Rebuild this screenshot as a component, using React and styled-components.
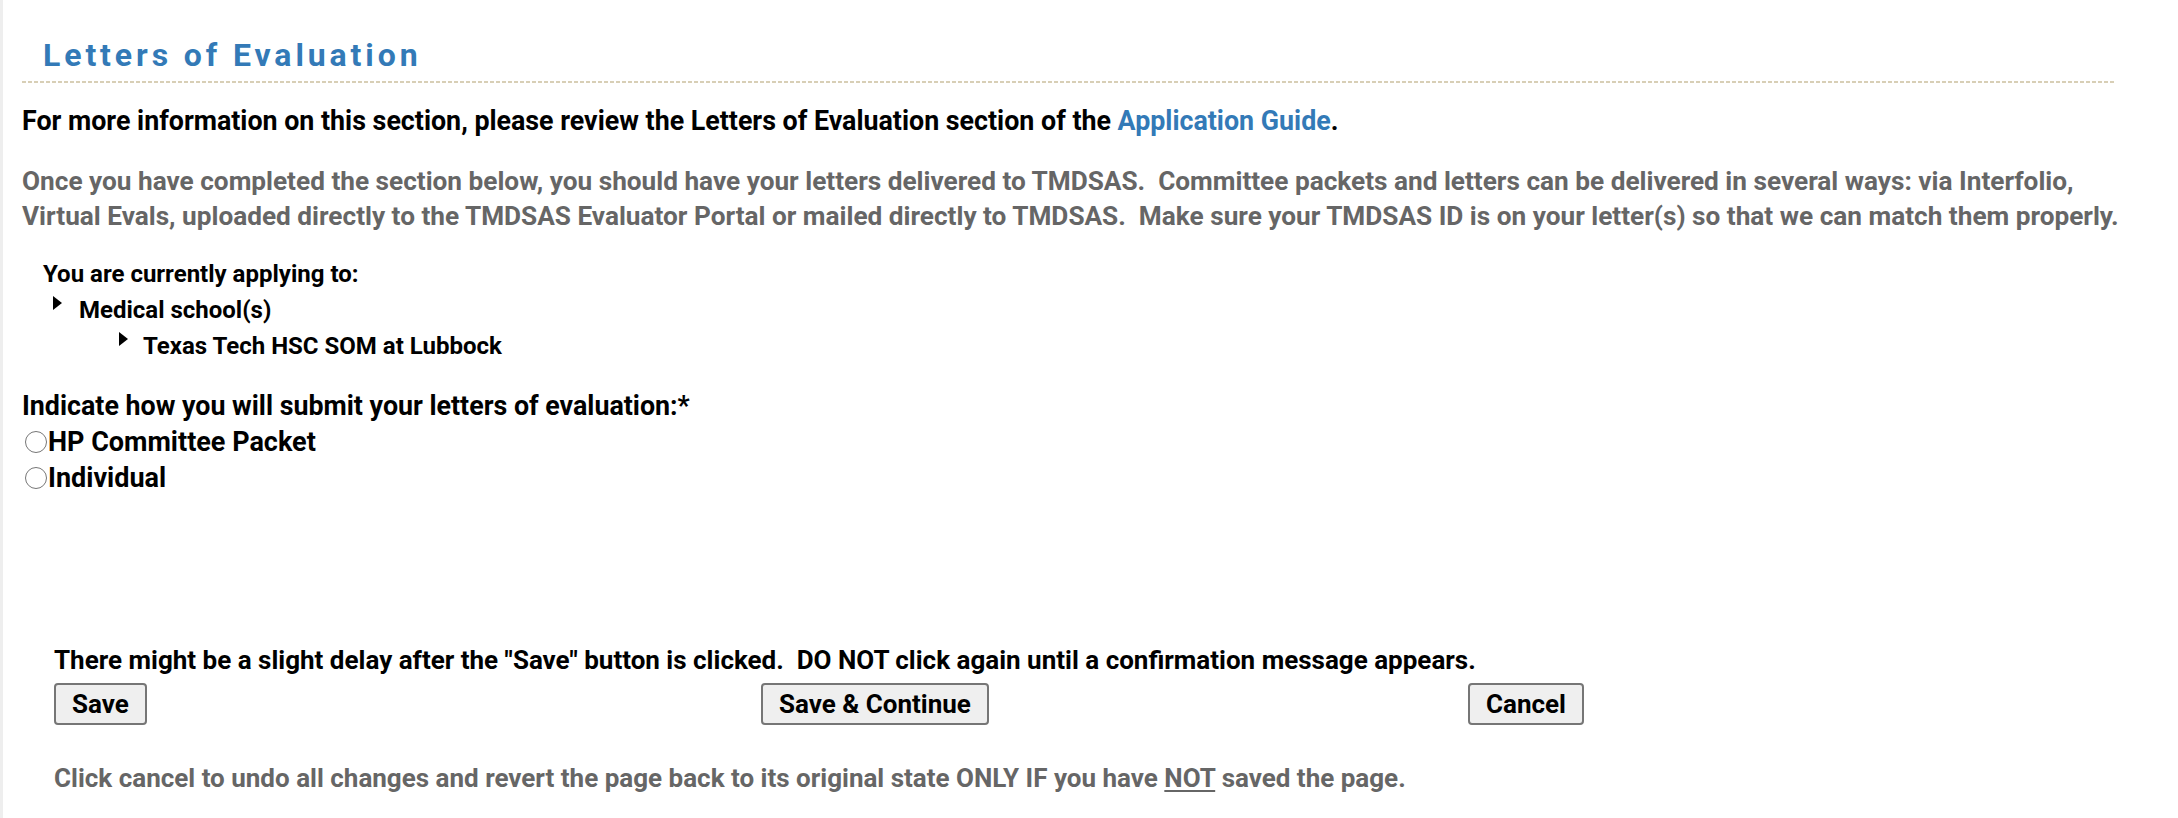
import React from "react";
import styled, { createGlobalStyle } from "styled-components";

const GlobalStyle = createGlobalStyle`
  html, body {
    margin: 0;
    padding: 0;
    background: #fff;
  }
  body {
    font-family: Roboto, "Liberation Sans", Arial, sans-serif;
    font-weight: 700;
    color: #000;
  }
`;

const StPage = styled.div`
  min-height: 818px;
  box-sizing: border-box;
  border-left: 3px solid #eeeeee;
  padding: 35px 0 0 19px;
`;

const Header = styled.div`
  width: 2093px;
  padding: 0 0 8px 21px;
  box-sizing: border-box;
  background-image: linear-gradient(to right, #d8cfb6 4px, transparent 4px);
  background-size: 6px 2px;
  background-repeat: repeat-x;
  background-position: left bottom;
`;

const Title = styled.h1`
  margin: 0;
  font-size: 32px;
  line-height: 40px;
  letter-spacing: 3.9px;
  color: #337ab7;
`;

const Line = styled.p`
  margin: ${(p) => p.$top || 0}px 0 0;
  font-size: ${(p) => p.$size || 26}px;
  line-height: ${(p) => p.$lh || 36}px;
  color: ${(p) => (p.$muted ? "#666666" : "#000")};
  a {
    color: #337ab7;
    text-decoration: none;
  }
  u {
    text-decoration-thickness: 2px;
    text-underline-offset: 3px;
  }
`;

const Applying = styled.div`
  margin-top: 22px;
  padding-left: 21px;
  font-size: 24px;
  line-height: 36px;
`;

const TreeItem = styled.div`
  display: flex;
  align-items: flex-start;
  padding-left: ${(p) => p.$indent}px;
  .arrow {
    width: 0;
    height: 0;
    margin: 4px ${(p) => p.$gap}px 0 0;
    border-left: 9px solid #000;
    border-top: 7px solid transparent;
    border-bottom: 7px solid transparent;
  }
`;

const RadioRow = styled.label`
  display: flex;
  align-items: center;
  font-size: 27px;
  line-height: 36px;
  input {
    width: 22px;
    height: 22px;
    margin: 0 1px 0 3px;
  }
`;

const Actions = styled.div`
  margin-top: 146px;
  padding-left: 32px;
`;

const ButtonRow = styled.div`
  display: grid;
  grid-template-columns: repeat(3, 707px);
  margin-top: 5px;
`;

const Button = styled.button`
  justify-self: start;
  height: 42px;
  padding: 0 16px;
  font-family: Roboto, "Liberation Sans", Arial, sans-serif;
  font-weight: 700;
  font-size: 26px;
  color: #000;
  background: #efefef;
  border: 2px solid #767676;
  border-radius: 4px;
`;

const App = () => {
  return (
    <>
      <GlobalStyle />
      <StPage>
        <Header>
          <Title>Letters of Evaluation</Title>
        </Header>
        <Line $top={20} $size={26.8}>
          For more information on this section, please review the Letters of
          Evaluation section of the <a href="#guide">Application Guide</a>.
        </Line>
        <Line $top={25} $lh={35} $size={26.2} $muted>
          Once you have completed the section below, you should have your
          letters delivered to TMDSAS.&nbsp; Committee packets and letters can be
          delivered in several ways: via Interfolio,
          <br />
          Virtual Evals, uploaded directly to the TMDSAS Evaluator Portal or
          mailed directly to TMDSAS.&nbsp; Make sure your TMDSAS ID is on your
          letter(s) so that we can match them properly.
        </Line>
        <Applying>
          <div>You are currently applying to:</div>
          <TreeItem $indent={10} $gap={17}>
            <span className="arrow" />
            Medical school(s)
          </TreeItem>
          <TreeItem $indent={76} $gap={15}>
            <span className="arrow" />
            Texas Tech HSC SOM at Lubbock
          </TreeItem>
        </Applying>
        <Line $top={25} $lh={35} $size={26.8}>
          Indicate how you will submit your letters of evaluation:*
        </Line>
        <RadioRow>
          <input type="radio" name="letters" />
          HP Committee Packet
        </RadioRow>
        <RadioRow>
          <input type="radio" name="letters" />
          Individual
        </RadioRow>
        <Actions>
          <Line>
            There might be a slight delay after the "Save" button is
            clicked.&nbsp; DO NOT click again until a confirmation message
            appears.
          </Line>
          <ButtonRow>
            <Button>Save</Button>
            <Button>Save &amp; Continue</Button>
            <Button>Cancel</Button>
          </ButtonRow>
          <Line $top={35} $muted>
            Click cancel to undo all changes and revert the page back to its
            original state ONLY IF you have <u>NOT</u> saved the page.
          </Line>
        </Actions>
      </StPage>
    </>
  );
};

export default App;
